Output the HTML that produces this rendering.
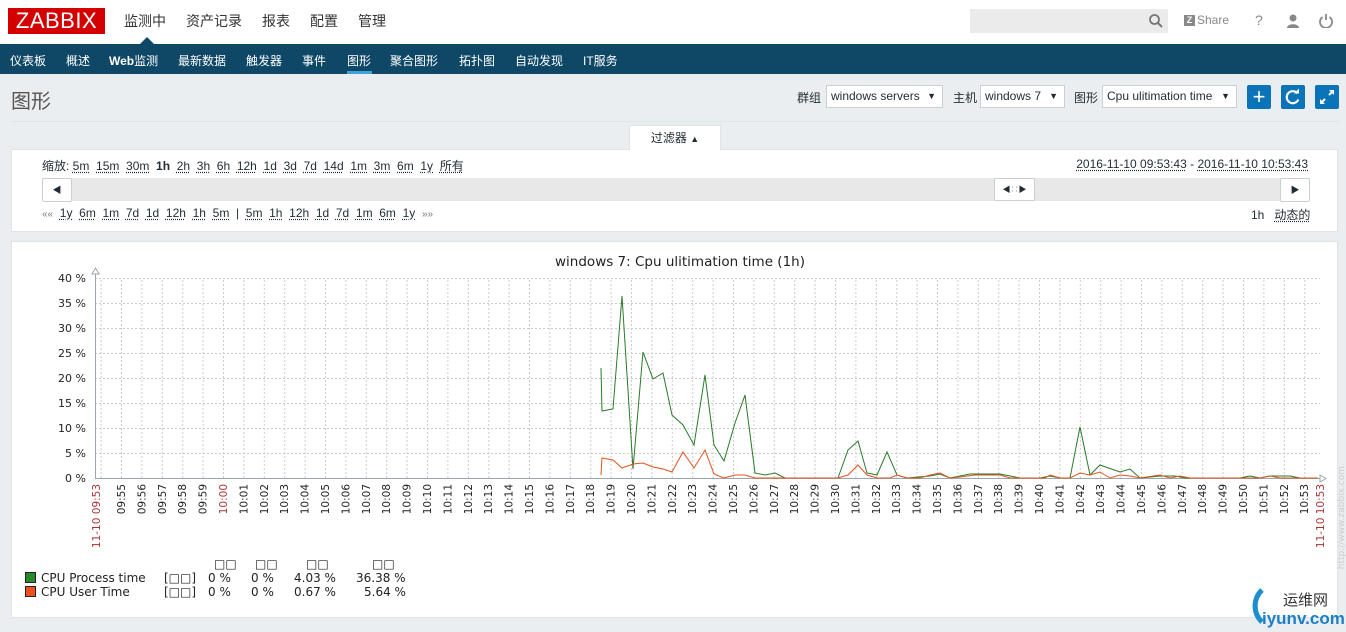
<!DOCTYPE html>
<html><head><meta charset="utf-8"><style>
*{margin:0;padding:0;box-sizing:border-box}
body{width:1346px;height:632px;overflow:hidden;background:#ebeef0;font-family:"Liberation Sans","Noto Sans CJK SC",sans-serif;color:#1f2c33;position:relative}
.a{position:absolute}
.hdr{left:0;top:0;width:1346px;height:44px;background:#fff}
.logo{left:8px;top:8px;width:97px;height:26px;background:#d40000;color:#fff;font-size:22px;line-height:26px;text-align:center;letter-spacing:0.5px}
.top{top:11px;font-size:14px;color:#333}
.nav{left:0;top:44px;width:1346px;height:30px;background:#0e4866}
.nav span{position:absolute;top:8px;font-size:12px;color:#fff}
.u{text-decoration:underline dotted;text-underline-offset:2px}
.sel{height:23px;top:85px;border:1px solid #c9d0d4;background:#fff;font-size:12px;line-height:21px;padding-left:4px}
.sel:after{content:"▼";position:absolute;right:6px;font-size:9px}
.btn{top:85px;width:24px;height:24px;background:#0b73b7;border-radius:2px;color:#fff;text-align:center}
.box{background:#fff;border:1px solid #dfe4e7}
.f{font-size:12px;top:157px;color:#1f2c33}
</style></head><body>
<div class="a hdr"></div>
<div class="a logo">ZABBIX</div>
<div class="a top" style="left:124px">监测中</div>
<div class="a top" style="left:186px">资产记录</div>
<div class="a top" style="left:262px">报表</div>
<div class="a top" style="left:310px">配置</div>
<div class="a top" style="left:358px">管理</div>
<div class="a" style="left:140px;top:37px;width:0;height:0;border:7px solid transparent;border-bottom-color:#0e4866;border-top:0"></div>
<div class="a" style="left:970px;top:9px;width:198px;height:24px;background:#ebebeb"></div>
<svg class="a" style="left:1148px;top:13px" width="16" height="16"><circle cx="6.5" cy="6.5" r="4.5" fill="none" stroke="#777" stroke-width="1.8"/><path d="M10 10l4 4" stroke="#777" stroke-width="2"/></svg>
<div class="a" style="left:1184px;top:15px;width:11px;height:11px;background:#888;color:#fff;font-size:9px;line-height:11px;text-align:center;font-weight:bold">Z</div>
<div class="a" style="left:1197px;top:13px;font-size:12px;color:#888">Share</div>
<div class="a" style="left:1255px;top:12px;font-size:14px;color:#888">?</div>
<svg class="a" style="left:1285px;top:13px" width="16" height="16"><circle cx="8" cy="5" r="3.5" fill="#888"/><path d="M2 15c0-5 12-5 12 0z" fill="#888"/></svg>
<svg class="a" style="left:1318px;top:12px" width="16" height="16"><path d="M4.5 5a6 6 0 1 0 7 0" fill="none" stroke="#888" stroke-width="1.8"/><path d="M8 2v6" stroke="#888" stroke-width="1.8"/></svg>
<div class="a nav">
<span style="left:10px">仪表板</span><span style="left:66px">概述</span><span style="left:109px;font-weight:bold">Web<b style="font-weight:normal">监测</b></span><span style="left:178px">最新数据</span><span style="left:246px">触发器</span><span style="left:302px">事件</span><span style="left:347px">图形</span><span style="left:390px">聚合图形</span><span style="left:459px">拓扑图</span><span style="left:515px">自动发现</span><span style="left:583px">IT服务</span>
<div class="a" style="left:347px;top:27px;width:25px;height:3px;background:#3fa2d9"></div>
</div>
<div class="a" style="left:11px;top:85px;font-size:20px;color:#555">图形</div>
<div class="a" style="left:11px;top:121px;width:1327px;height:1px;background:#dfe4e7"></div>
<div class="a" style="left:797px;top:89px;font-size:12px">群组</div>
<div class="a sel" style="left:826px;width:117px">windows servers</div>
<div class="a" style="left:953px;top:89px;font-size:12px">主机</div>
<div class="a sel" style="left:980px;width:85px">windows 7</div>
<div class="a" style="left:1074px;top:89px;font-size:12px">图形</div>
<div class="a sel" style="left:1102px;width:135px">Cpu ulitimation time</div>
<div class="a btn" style="left:1247px;font-size:22px;line-height:23px">+</div>
<div class="a btn" style="left:1281px"><svg width="24" height="24"><path d="M16.5 8.5a6 6 0 1 0 .8 6" fill="none" stroke="#fff" stroke-width="2.2"/><path d="M13 8.5h5v-5z" fill="#fff"/></svg></div>
<div class="a btn" style="left:1315px"><svg width="24" height="24"><path d="M14 5h5v5zM10 19H5v-5z" fill="#fff"/><path d="M17 7l-3 3M7 17l3-3" stroke="#fff" stroke-width="2"/></svg></div>
<div class="a" style="left:629px;top:125px;width:92px;height:25px;background:#fff;border:1px solid #dfe4e7;border-bottom:none;font-size:12px;text-align:center;line-height:24px;z-index:2">过滤器 <span style="font-size:9px">▲</span></div>
<div class="a box" style="left:11px;top:149px;width:1327px;height:83px"></div>
<div class="a f" style="left:42px">缩放: <span class="u">5m</span>&nbsp; <span class="u">15m</span>&nbsp; <span class="u">30m</span>&nbsp; <b>1h</b>&nbsp; <span class="u">2h</span>&nbsp; <span class="u">3h</span>&nbsp; <span class="u">6h</span>&nbsp; <span class="u">12h</span>&nbsp; <span class="u">1d</span>&nbsp; <span class="u">3d</span>&nbsp; <span class="u">7d</span>&nbsp; <span class="u">14d</span>&nbsp; <span class="u">1m</span>&nbsp; <span class="u">3m</span>&nbsp; <span class="u">6m</span>&nbsp; <span class="u">1y</span>&nbsp; <span class="u">所有</span></div>
<div class="a f" style="right:38px"><span class="u">2016-11-10 09:53:43</span> - <span class="u">2016-11-10 10:53:43</span></div>
<div class="a" style="left:42px;top:178px;width:1268px;height:23px;background:#e8e8e8"></div>
<div class="a" style="left:42px;top:178px;width:30px;height:24px;background:#fff;border:1px solid #c9d0d4;border-radius:2px;font-size:9px;text-align:center;line-height:22px">◀</div>
<div class="a" style="left:1280px;top:178px;width:30px;height:24px;background:#fff;border:1px solid #c9d0d4;border-radius:2px;font-size:9px;text-align:center;line-height:22px">▶</div>
<div class="a" style="left:994px;top:178px;width:41px;height:23px;background:#fff;border:1px solid #c9d0d4;border-radius:2px;font-size:8px;text-align:center;line-height:21px">◀<span style="color:#999">∷</span>▶</div>
<div class="a f" style="left:42px;top:206px;font-size:12px"><span style="color:#777;font-size:10px">««</span>&nbsp; <span class="u">1y</span>&nbsp; <span class="u">6m</span>&nbsp; <span class="u">1m</span>&nbsp; <span class="u">7d</span>&nbsp; <span class="u">1d</span>&nbsp; <span class="u">12h</span>&nbsp; <span class="u">1h</span>&nbsp; <span class="u">5m</span>&nbsp; |&nbsp; <span class="u">5m</span>&nbsp; <span class="u">1h</span>&nbsp; <span class="u">12h</span>&nbsp; <span class="u">1d</span>&nbsp; <span class="u">7d</span>&nbsp; <span class="u">1m</span>&nbsp; <span class="u">6m</span>&nbsp; <span class="u">1y</span>&nbsp; <span style="color:#777;font-size:10px">»»</span></div>
<div class="a f" style="left:1251px;top:206px">1h&nbsp;&nbsp; <span class="u">动态的</span></div>
<div class="a box" style="left:11px;top:241px;width:1327px;height:377px"></div>
<svg class="a" style="left:0;top:0" width="1346" height="632" font-family="DejaVu Sans,sans-serif">
<defs><pattern id="vg" x="121" y="0" width="20.4" height="632" patternUnits="userSpaceOnUse"><line x1="0.5" y1="0" x2="0.5" y2="632" stroke="#ccc" stroke-dasharray="2,2"/></pattern></defs>
<rect x="100" y="278" width="1220" height="200" fill="url(#vg)"/>
<g stroke="#ccc" stroke-dasharray="2,2"><line x1="95" y1="278.5" x2="1320" y2="278.5"/><line x1="95" y1="303.5" x2="1320" y2="303.5"/><line x1="95" y1="328.5" x2="1320" y2="328.5"/><line x1="95" y1="353.5" x2="1320" y2="353.5"/><line x1="95" y1="378.5" x2="1320" y2="378.5"/><line x1="95" y1="403.5" x2="1320" y2="403.5"/><line x1="95" y1="428.5" x2="1320" y2="428.5"/><line x1="95" y1="453.5" x2="1320" y2="453.5"/></g>
<path d="M95.5 272V478.5H1322" fill="none" stroke="#9aa7ae"/>
<path d="M92 274l3.5-6 3.5 6z M1320 475l6 3.5-6 3.5z" fill="#fff" stroke="#9aa7ae"/>
<text x="680" y="266" font-size="13.5" text-anchor="middle" fill="#222">windows 7: Cpu  ulitimation time (1h)</text>
<g font-size="11" fill="#222" text-anchor="end"><text x="86" y="282">40 %</text><text x="86" y="307">35 %</text><text x="86" y="332">30 %</text><text x="86" y="357">25 %</text><text x="86" y="382">20 %</text><text x="86" y="407">15 %</text><text x="86" y="432">10 %</text><text x="86" y="457">5 %</text><text x="86" y="482">0 %</text></g>
<polyline fill="none" stroke="#2a7a2a" stroke-width="1" points="601,368 602,411 613,409 622,296 633,469 643,352 653,379 663,373 672,415 683,425 694,445 705,375 714,445 724,461 735,423 745,395 755,473 765,475 775,473 785,478 838,478 848,450 858,441 867,473 877,475 887,452 897,475 907,478 930,476 940,474 950,478 960,476 970,474 1000,474 1010,476 1020,478 1040,478 1050,476 1060,478 1070,478 1080,427 1090,475 1100,465 1120,472 1130,469 1140,478 1160,476 1175,476 1185,478 1240,478 1250,476 1260,478 1270,476 1290,476 1300,478 1318,478"/>
<polyline fill="none" stroke="#e0541e" stroke-width="1" points="601,475 602,458 613,460 622,468 633,464 643,463 653,467 663,469 672,472 683,452 694,468 705,450 714,474 724,478 735,475 745,475 755,478 838,478 848,475 858,465 867,475 877,478 890,478 897,475 907,478 920,478 930,475 940,473 950,478 960,477 975,475 1000,475 1010,478 1045,478 1050,475 1060,478 1070,478 1080,473 1090,475 1100,472 1110,478 1120,475 1130,476 1140,478 1160,475 1170,478 1180,476 1190,478 1260,478 1270,476 1280,478 1318,478"/>
<g font-size="10.5" fill="#222" text-anchor="end">
<text transform="translate(125,484) rotate(-90)">09:55</text><text transform="translate(145.4,484) rotate(-90)">09:56</text><text transform="translate(165.8,484) rotate(-90)">09:57</text><text transform="translate(186.2,484) rotate(-90)">09:58</text><text transform="translate(206.6,484) rotate(-90)">09:59</text><text transform="translate(227,484) rotate(-90)" fill="#a33">10:00</text><text transform="translate(247.4,484) rotate(-90)">10:01</text><text transform="translate(267.8,484) rotate(-90)">10:02</text><text transform="translate(288.2,484) rotate(-90)">10:03</text><text transform="translate(308.6,484) rotate(-90)">10:04</text><text transform="translate(329,484) rotate(-90)">10:05</text><text transform="translate(349.4,484) rotate(-90)">10:06</text><text transform="translate(369.8,484) rotate(-90)">10:07</text><text transform="translate(390.2,484) rotate(-90)">10:08</text><text transform="translate(410.6,484) rotate(-90)">10:09</text><text transform="translate(431,484) rotate(-90)">10:10</text><text transform="translate(451.4,484) rotate(-90)">10:11</text><text transform="translate(471.8,484) rotate(-90)">10:12</text><text transform="translate(492.2,484) rotate(-90)">10:13</text><text transform="translate(512.6,484) rotate(-90)">10:14</text><text transform="translate(533,484) rotate(-90)">10:15</text><text transform="translate(553.4,484) rotate(-90)">10:16</text><text transform="translate(573.8,484) rotate(-90)">10:17</text><text transform="translate(594.2,484) rotate(-90)">10:18</text><text transform="translate(614.6,484) rotate(-90)">10:19</text><text transform="translate(635,484) rotate(-90)">10:20</text><text transform="translate(655.4,484) rotate(-90)">10:21</text><text transform="translate(675.8,484) rotate(-90)">10:22</text><text transform="translate(696.2,484) rotate(-90)">10:23</text><text transform="translate(716.6,484) rotate(-90)">10:24</text><text transform="translate(737,484) rotate(-90)">10:25</text><text transform="translate(757.4,484) rotate(-90)">10:26</text><text transform="translate(777.8,484) rotate(-90)">10:27</text><text transform="translate(798.2,484) rotate(-90)">10:28</text><text transform="translate(818.6,484) rotate(-90)">10:29</text><text transform="translate(839,484) rotate(-90)">10:30</text><text transform="translate(859.4,484) rotate(-90)">10:31</text><text transform="translate(879.8,484) rotate(-90)">10:32</text><text transform="translate(900.2,484) rotate(-90)">10:33</text><text transform="translate(920.6,484) rotate(-90)">10:34</text><text transform="translate(941,484) rotate(-90)">10:35</text><text transform="translate(961.4,484) rotate(-90)">10:36</text><text transform="translate(981.8,484) rotate(-90)">10:37</text><text transform="translate(1002.2,484) rotate(-90)">10:38</text><text transform="translate(1022.6,484) rotate(-90)">10:39</text><text transform="translate(1043,484) rotate(-90)">10:40</text><text transform="translate(1063.4,484) rotate(-90)">10:41</text><text transform="translate(1083.8,484) rotate(-90)">10:42</text><text transform="translate(1104.2,484) rotate(-90)">10:43</text><text transform="translate(1124.6,484) rotate(-90)">10:44</text><text transform="translate(1145,484) rotate(-90)">10:45</text><text transform="translate(1165.4,484) rotate(-90)">10:46</text><text transform="translate(1185.8,484) rotate(-90)">10:47</text><text transform="translate(1206.2,484) rotate(-90)">10:48</text><text transform="translate(1226.6,484) rotate(-90)">10:49</text><text transform="translate(1247,484) rotate(-90)">10:50</text><text transform="translate(1267.4,484) rotate(-90)">10:51</text><text transform="translate(1287.8,484) rotate(-90)">10:52</text><text transform="translate(1308.2,484) rotate(-90)">10:53</text>
<text transform="translate(100,484) rotate(-90)" fill="#a33">11-10 09:53</text><text transform="translate(1324,484) rotate(-90)" fill="#a33">11-10 10:53</text>
<text transform="translate(1344,466) rotate(-90)" fill="#ccc" font-size="9">http://www.zabbix.com</text>
</g>
<g font-size="12" fill="#222">
<text x="214" y="568">□□</text><text x="255" y="568">□□</text><text x="306" y="568">□□</text><text x="372" y="568">□□</text>
<rect x="25.5" y="572.5" width="10" height="10" fill="#2a8a2a" stroke="#222"/><text x="41" y="582">CPU Process time</text><text x="164" y="582">[□□]</text><text x="208" y="582">0 %</text><text x="251" y="582">0 %</text><text x="294" y="582">4.03 %</text><text x="356" y="582">36.38 %</text>
<rect x="25.5" y="586.5" width="10" height="10" fill="#f05020" stroke="#222"/><text x="41" y="596">CPU User Time</text><text x="164" y="596">[□□]</text><text x="208" y="596">0 %</text><text x="251" y="596">0 %</text><text x="294" y="596">0.67 %</text><text x="364" y="596">5.64 %</text>
</g>
<path d="M1262 590a22 22 0 0 0 0 32" fill="none" stroke="#1c8fd0" stroke-width="5"/>
<text x="1283" y="605" font-size="15" fill="#333" font-family="Noto Sans CJK SC,sans-serif">运维网</text>
<text x="1262" y="624" font-size="17" font-weight="bold" fill="#1c7fc8" font-family="Liberation Sans,sans-serif">iyunv.com</text>
</svg>
</body></html>
